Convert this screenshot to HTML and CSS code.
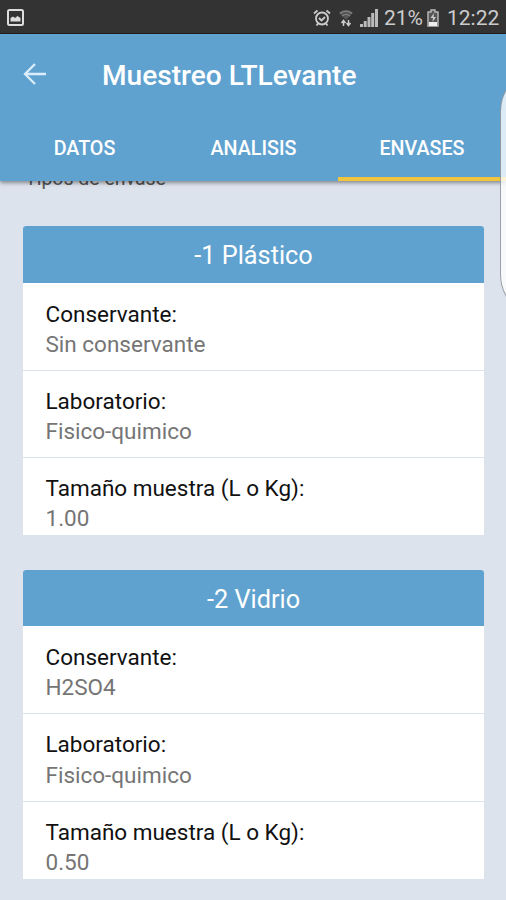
FILE: index.html
```html
<!DOCTYPE html>
<html lang="es">
<head>
<meta charset="utf-8">
<title>Muestreo LTLevante</title>
<link rel="stylesheet" href="styles.css">
</head>
<body>
<div class="screen">
  <div class="status">
    <svg class="photo" viewBox="0 0 17 17"><rect x="1" y="1" width="15" height="15" rx="1.5" fill="#333" stroke="#ddd" stroke-width="2"/><path d="M3.500 12.500V9l2.500-1.500 2 1.500 2.500-2 3 2v3.500z" fill="#ddd"/></svg>
    <div class="indicators">
      <svg class="alarm" viewBox="0 0 18 18"><g fill="none" stroke="#ccc" stroke-width="1.800"><circle cx="9" cy="9.500" r="6"/><path d="M1 4.500L4.500 1.500M17 4.500L13.500 1.500M3.500 16.500l1.500-2M14.500 16.500l-1.500-2M6 9l2.500 2.500L12 8"/></g></svg>
      <svg class="wifi" viewBox="0 0 14 18"><path d="M0 3.500Q7-2 14 3.500L7 11z" fill="#555"/><path d="M1 4.500Q7 0 13 4.500M3 7Q7 4 11 7" fill="none" stroke="#888" stroke-width="1.200"/><path d="M4.500 17v-5M2.500 14l2-2.500 2 2.500M9.500 11v5M7.500 14l2 2.500 2-2.500" fill="none" stroke="#ccc" stroke-width="1.500"/></svg>
      <svg class="signal" viewBox="0 0 18 18"><path d="M0 18v-3h3v3zM3.700 18v-6h3v6zM7.500 18V8h3v10zM11.200 18V4h3v14zM15 18V0h3v18z" fill="#bbb"/></svg>
      <span class="percent">21%</span>
      <svg class="battery" viewBox="0 0 12 18"><path d="M4 1h4v2h3v14H1V3h3z" fill="#555" stroke="#bbb" stroke-width="1.400"/><path d="M2 13h8v4H2z" fill="#eee"/><path d="M7 4L3.500 9H6l-.5 4L9 8H6.500z" fill="#ccc"/></svg>
      <span class="clock">12:22</span>
    </div>
  </div>
  <header class="appbar">
    <div class="titlebar">
      <svg class="back" viewBox="0 0 24 24"><path d="M23 12H2M12 2L2 12l10 10" fill="none" stroke="#d9edfb" stroke-width="2.300"/></svg>
      <h1>Muestreo LTLevante</h1>
    </div>
    <nav class="tabs">
      <span class="tab">DATOS</span>
      <span class="tab">ANALISIS</span>
      <span class="tab active">ENVASES</span>
    </nav>
  </header>
  <main>
    <p class="caption">Tipos de envase</p>
    <section class="card">
      <h2>-1 Plástico</h2>
      <dl>
        <div class="row"><dt>Conservante:</dt><dd>Sin conservante</dd></div>
        <div class="row"><dt>Laboratorio:</dt><dd>Fisico-quimico</dd></div>
        <div class="row"><dt>Tamaño muestra (L o Kg):</dt><dd>1.00</dd></div>
      </dl>
    </section>
    <section class="card">
      <h2>-2 Vidrio</h2>
      <dl>
        <div class="row"><dt>Conservante:</dt><dd>H2SO4</dd></div>
        <div class="row"><dt>Laboratorio:</dt><dd>Fisico-quimico</dd></div>
        <div class="row"><dt>Tamaño muestra (L o Kg):</dt><dd>0.50</dd></div>
      </dl>
    </section>
  </main>
  <div class="edge-handle"></div>
</div>
</body>
</html>
```
FILE: styles.css
```css
* { box-sizing: border-box; margin: 0; padding: 0; }
body { font-family: Roboto, "Liberation Sans", sans-serif; }
.screen { position: relative; width: 506px; height: 900px; overflow: hidden; background: #dde3ed; }
.status { height: 34px; background: #333; border-bottom: 1px solid #241f1c; display: flex; justify-content: space-between; padding: 0 7px 0 6.500px; color: #ccc; font-size: 21px; }
.photo { width: 17px; height: 17px; margin-top: 9px; }
.indicators { display: flex; align-items: flex-start; padding-top: 9px; }
.indicators span { line-height: 19px; white-space: nowrap; }
.alarm { width: 18px; height: 18px; margin-right: 8px; }
.wifi { width: 14px; height: 18px; margin-right: 7px; }
.signal { width: 18px; height: 18px; margin-right: 6px; }
.percent { width: 43px; }
.battery { width: 12px; height: 18px; margin-right: 8px; }
.clock { width: 52px; }
.appbar { position: relative; z-index: 1; height: 146.500px; background: #5fa2d0; color: #fff; box-shadow: 0 2px 4px rgba(0, 0, 0, .4); }
.titlebar { height: 80px; display: flex; align-items: center; padding-left: 23px; }
.back { width: 24px; height: 24px; margin-right: 55px; }
h1 { font-size: 28.100px; font-weight: 500; line-height: 36px; padding-top: 3px; white-space: nowrap; }
.tabs { height: 67px; display: grid; grid-template-columns: 169px 169px 168px; }
.tab { height: 67px; text-align: center; font-size: 19.700px; font-weight: 500; line-height: 70px; }
.active { border-bottom: 4px solid #efc53d; }
main { padding: 0 22px 0 23px; }
.caption { height: 45.500px; line-height: 24px; margin-top: -14px; margin-bottom: 14px; padding-left: 2px; font-size: 19.500px; color: #555; }
.card { height: 309px; margin-bottom: 34.500px; border-radius: 3px 3px 0 0; overflow: hidden; background: #fff; }
h2 { height: 56.500px; background: #5fa2d0; color: #fff; text-align: center; font-size: 25.300px; font-weight: 400; line-height: 60px; }
.row { height: 87.300px; padding: 15px 22.500px 0; border-top: 1px solid #dde3ed; font-size: 22.500px; line-height: 30.300px; }
.row:first-child { border-top-color: #fff; }
dt { color: #111; }
dd { color: #757575; }
.edge-handle { position: absolute; z-index: 2; left: 500px; top: 82px; width: 40px; height: 222px; border: 1px solid rgba(90, 100, 110, .6); border-radius: 18px / 30px; background: rgba(255, 255, 255, .78); }
```
